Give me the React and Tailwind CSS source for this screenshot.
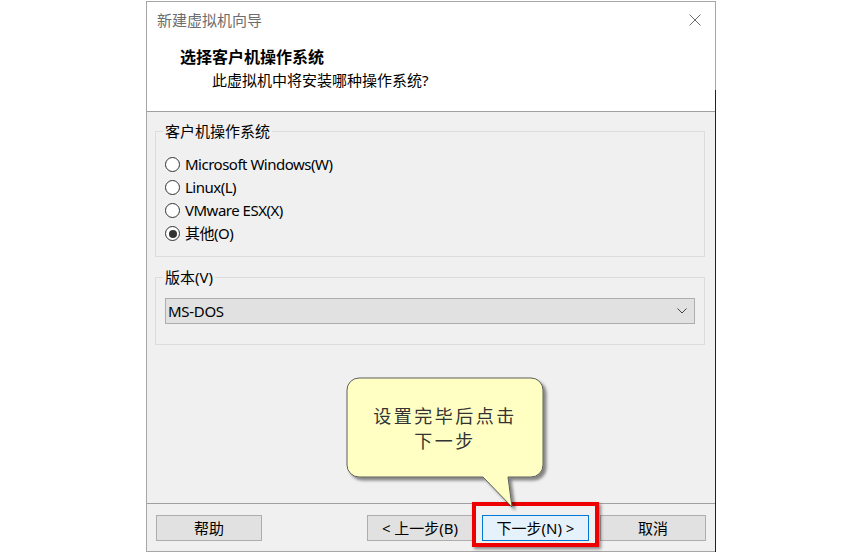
import React from "react";

const FONT = { fontFamily: '"Noto Sans", "Noto Sans CJK SC", sans-serif' };

function Radio({ label, checked }) {
  return (
    <div className="flex items-center h-[23px]">
      <span className="w-[15px] h-[15px] rounded-full border border-[#333] bg-white flex items-center justify-center">
        {checked && <span className="w-[8px] h-[8px] rounded-full bg-[#333]" />}
      </span>
      <span className="ml-[5px] text-black tracking-[-0.5px]">{label}</span>
    </div>
  );
}

function Group({ title, className, children }) {
  return (
    <div className={"relative border border-[#dcdcdc] ml-[8px] mr-[10px] " + className}>
      <span className="absolute left-[7px] -top-[11px] px-[2px] bg-[#f0f0f0] leading-[20px] text-black">
        {title}
      </span>
      {children}
    </div>
  );
}

function Button({ children, primary, className = "" }) {
  return (
    <button
      className={
        "w-[106px] h-[26px] border text-black leading-none " +
        (primary ? "bg-[#e5f1fb] border-[#0078d7] " : "bg-[#e1e1e1] border-[#adadad] ") +
        className
      }
    >
      {children}
    </button>
  );
}

function Callout() {
  return (
    <div className="absolute left-[340px] top-[372px] w-[215px] h-[140px]">
      <svg width="215" height="140" className="absolute inset-0">
        <defs>
          <filter id="sh" x="-10%" y="-10%" width="130%" height="130%">
            <feDropShadow dx="3" dy="3" stdDeviation="1.5" floodColor="#000" floodOpacity="0.45" />
          </filter>
        </defs>
        <path
          d="M19,6 H191 A12,12 0 0 1 203,18 V93 A12,12 0 0 1 191,105 H168 L172,135 L143,105 H19 A12,12 0 0 1 7,93 V18 A12,12 0 0 1 19,6 Z"
          fill="#ffffc4"
          stroke="#5c5c5c"
          strokeWidth="1"
          filter="url(#sh)"
        />
      </svg>
      <div className="absolute left-[7px] top-[7px] w-[196px] h-[99px] flex flex-col items-center justify-center text-[18px] leading-[25px] tracking-[2.5px] text-[#333]">
        <span>设置完毕后点击</span>
        <span>下一步</span>
      </div>
    </div>
  );
}

export default function App() {
  return (
    <div className="relative w-[848px] h-[552px] bg-white overflow-hidden text-[15px]" style={FONT}>
      <div className="relative ml-[146px] mt-[1px] w-[570px] h-[551px] border border-[#a6a6a6] flex flex-col bg-[#f0f0f0]">
        {/* header */}
        <div className="h-[110px] bg-white border-b border-[#a0a0a0] pt-[8px] pl-[10px]">
          <div className="flex items-center justify-between h-[20px] leading-[20px]">
            <span className="text-[#6d6d6d]">新建虚拟机向导</span>
            <svg width="12" height="12" viewBox="0 0 12 12" className="mr-[14px]">
              <path d="M0.5,0.5 L11.5,11.5 M11.5,0.5 L0.5,11.5" stroke="#6a6a6a" strokeWidth="1" />
            </svg>
          </div>
          <div className="mt-[17px] ml-[23px] leading-[20px] text-[16px] font-bold text-black">选择客户机操作系统</div>
          <div className="mt-[3px] ml-[55px] leading-[20px] text-black">此虚拟机中将安装哪种操作系统?</div>
        </div>

        {/* content */}
        <div className="flex-1">
          <Group title="客户机操作系统" className="mt-[19px] h-[126px] pt-[21px] pl-[9px]">
            <Radio label="Microsoft Windows(W)" />
            <Radio label="Linux(L)" />
            <Radio label="VMware ESX(X)" />
            <Radio label="其他(O)" checked />
          </Group>
          <Group title="版本(V)" className="mt-[20px] h-[68px] pt-[20px] pl-[9px] pr-[9px]">
            <div className="h-[26px] bg-[#e1e1e1] border border-[#adadad] flex items-center justify-between pl-[2px] pr-[7px]">
              <span className="text-black tracking-[-0.3px]">MS-DOS</span>
              <svg width="10" height="6" viewBox="0 0 10 6">
                <path d="M0.5,0.5 L5,5 L9.5,0.5" fill="none" stroke="#444" strokeWidth="1" />
              </svg>
            </div>
          </Group>
        </div>

        {/* footer */}
        <div className="h-[48px] border-t border-[#a0a0a0] flex items-start pt-[11px] px-[9px]">
          <Button>帮助</Button>
          <Button className="ml-auto">&lt; 上一步(B)</Button>
          <Button primary className="ml-[9px] w-[107px]">下一步(N) &gt;</Button>
          <Button className="ml-[11px]">取消</Button>
        </div>

        <div className="absolute -right-[1px] top-[88px] -bottom-[1px] w-[1px] bg-[#222]" />
      </div>

      {/* annotations */}
      <div className="absolute left-[472px] top-[502px] w-[127px] h-[45px] border-[4px] border-[#ee0000] shadow-[2px_2px_3px_rgba(0,0,0,0.45)]" />
      <Callout />
    </div>
  );
}
